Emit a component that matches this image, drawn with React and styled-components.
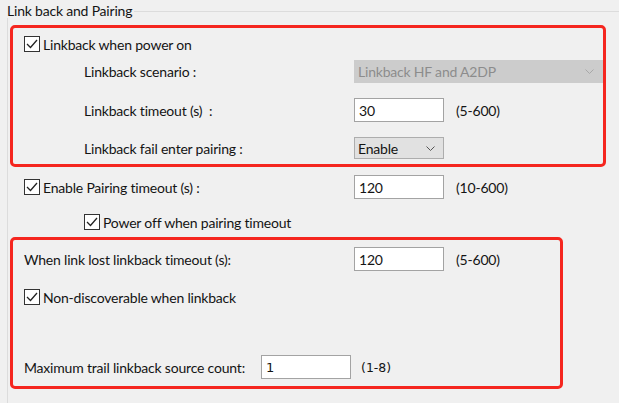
import styled, { createGlobalStyle } from 'styled-components';

const GlobalStyle = createGlobalStyle`
  html, body {
    margin: 0;
    padding: 0;
    background: #f0f0f0;
    overflow: hidden;
  }
  body {
    font-family: Lato, "Liberation Sans", sans-serif;
    font-size: 14px;
    letter-spacing: -0.2px;
    color: #141414;
  }
`;

const Page = styled.div`
  width: 619px;
  height: 403px;
  overflow: hidden;
  padding-top: 4px;
  box-sizing: border-box;
`;

const Group = styled.fieldset`
  margin: 0 0 0 7px;
  padding: 0 0 40px 0;
  width: 700px;
  border: 1px solid #dcdcdc;
  border-right: none;
  min-height: 420px;
`;

const Legend = styled.legend`
  padding: 0 2px 0 0;
  margin-left: -1px;
  line-height: 14px;
  font-size: 14px;
`;

const RedBox = styled.div`
  margin: ${p => p.$top || 0}px 0 0 2px;
  width: ${p => p.$width}px;
  box-sizing: border-box;
  border: 3px solid #f5261f;
  border-radius: 5px;
  padding: ${p => p.$pad};
`;

const Row = styled.div`
  display: flex;
  align-items: center;
  height: 24px;
  margin-top: ${p => p.$top || 0}px;
  padding-left: ${p => p.$left || 0}px;
`;

const Label = styled.div`
  width: ${p => p.$width || 330}px;
  padding-left: ${p => p.$indent || 0}px;
  box-sizing: border-box;
  flex-shrink: 0;
  white-space: nowrap;
  display: flex;
  align-items: center;
`;

const CheckLabel = styled.label`
  display: flex;
  align-items: center;
  gap: 3px;
  white-space: nowrap;
`;

const Box = styled.span`
  width: 16px;
  height: 16px;
  box-sizing: border-box;
  border: 1px solid #333;
  background: #fff;
  display: flex;
  align-items: center;
  justify-content: center;
`;

const TextInput = styled.div`
  width: ${p => p.$width || 90}px;
  height: 24px;
  box-sizing: border-box;
  border: 1px solid #a3a3a3;
  background: #fff;
  padding-left: 4px;
  display: flex;
  align-items: center;
  font-family: ${p => (p.$tahoma ? '"DejaVu Sans", sans-serif' : 'inherit')};
  font-size: ${p => (p.$tahoma ? '13px' : '14px')};
  letter-spacing: ${p => (p.$tahoma ? '0' : '-0.2px')};
`;

const Combo = styled.div`
  width: ${p => p.$width}px;
  height: ${p => (p.$disabled ? 23 : 22)}px;
  box-sizing: border-box;
  background: ${p => (p.$disabled ? '#cccccc' : '#e1e1e1')};
  border: 1px solid ${p => (p.$disabled ? '#cccccc' : '#adadad')};
  color: ${p => (p.$disabled ? '#8c8c8c' : '#141414')};
  display: flex;
  align-items: center;
  justify-content: space-between;
  padding: 0 8px 0 3px;
`;

const Hint = styled.div`
  margin-left: ${p => (p.$tahoma ? 10 : 12)}px;
  font-family: ${p => (p.$tahoma ? '"DejaVu Sans", sans-serif' : 'inherit')};
  font-size: ${p => (p.$tahoma ? '12.5px' : '14px')};
  letter-spacing: ${p => (p.$tahoma ? '0' : '-0.2px')};
  white-space: nowrap;
`;

function Tick() {
  return (
    <svg width="12" height="10" viewBox="0 0 12 10">
      <polyline points="1,5 4.5,8.5 11,1" fill="none" stroke="#222" strokeWidth="1.3" />
    </svg>
  );
}

function Chevron({ color }) {
  return (
    <svg width="9" height="5" viewBox="0 0 9 5">
      <polyline points="0.5,0.5 4.5,4.5 8.5,0.5" fill="none" stroke={color} strokeWidth="1" />
    </svg>
  );
}

function Check({ children }) {
  return (
    <CheckLabel>
      <Box><Tick /></Box>
      {children}
    </CheckLabel>
  );
}

export default function App() {
  return (
    <Page>
      <GlobalStyle />
      <Group>
        <Legend>Link back and Pairing</Legend>

        <RedBox $top={7} $width={596} $pad="4px 0 4px 11px">
          <Row>
            <Check>Linkback when power on</Check>
          </Row>
          <Row $top={3}>
            <Label $indent={60}>Linkback scenario :</Label>
            <Combo $width={250} $disabled>
              <span>Linkback HF and A2DP</span>
              <Chevron color="#a8a8a8" />
            </Combo>
          </Row>
          <Row $top={15}>
            <Label $indent={60}>Linkback timeout (s)&nbsp;&nbsp;:</Label>
            <TextInput>30</TextInput>
            <Hint>(5-600)</Hint>
          </Row>
          <Row $top={14}>
            <Label $indent={60}>Linkback fail enter pairing :</Label>
            <Combo $width={90}>
              <span>Enable</span>
              <Chevron color="#555" />
            </Combo>
          </Row>
        </RedBox>

        <Row $top={8} $left={16}>
          <Label>
            <Check>Enable Pairing timeout (s) :</Check>
          </Label>
          <TextInput>120</TextInput>
          <Hint>(10-600)</Hint>
        </Row>
        <Row $top={11} $left={16}>
          <Label $indent={60}>
            <Check>Power off when pairing timeout</Check>
          </Label>
        </Row>

        <RedBox $top={3} $width={553} $pad="7px 0 7px 11px">
          <Row>
            <Label>When link lost linkback timeout (s):</Label>
            <TextInput>120</TextInput>
            <Hint>(5-600)</Hint>
          </Row>
          <Row $top={14}>
            <Check>Non-discoverable when linkback</Check>
          </Row>
          <Row $top={46}>
            <Label $width={237}>Maximum trail linkback source count:</Label>
            <TextInput $width={90} $tahoma>1</TextInput>
            <Hint $tahoma>(1-8)</Hint>
          </Row>
        </RedBox>
      </Group>
    </Page>
  );
}
